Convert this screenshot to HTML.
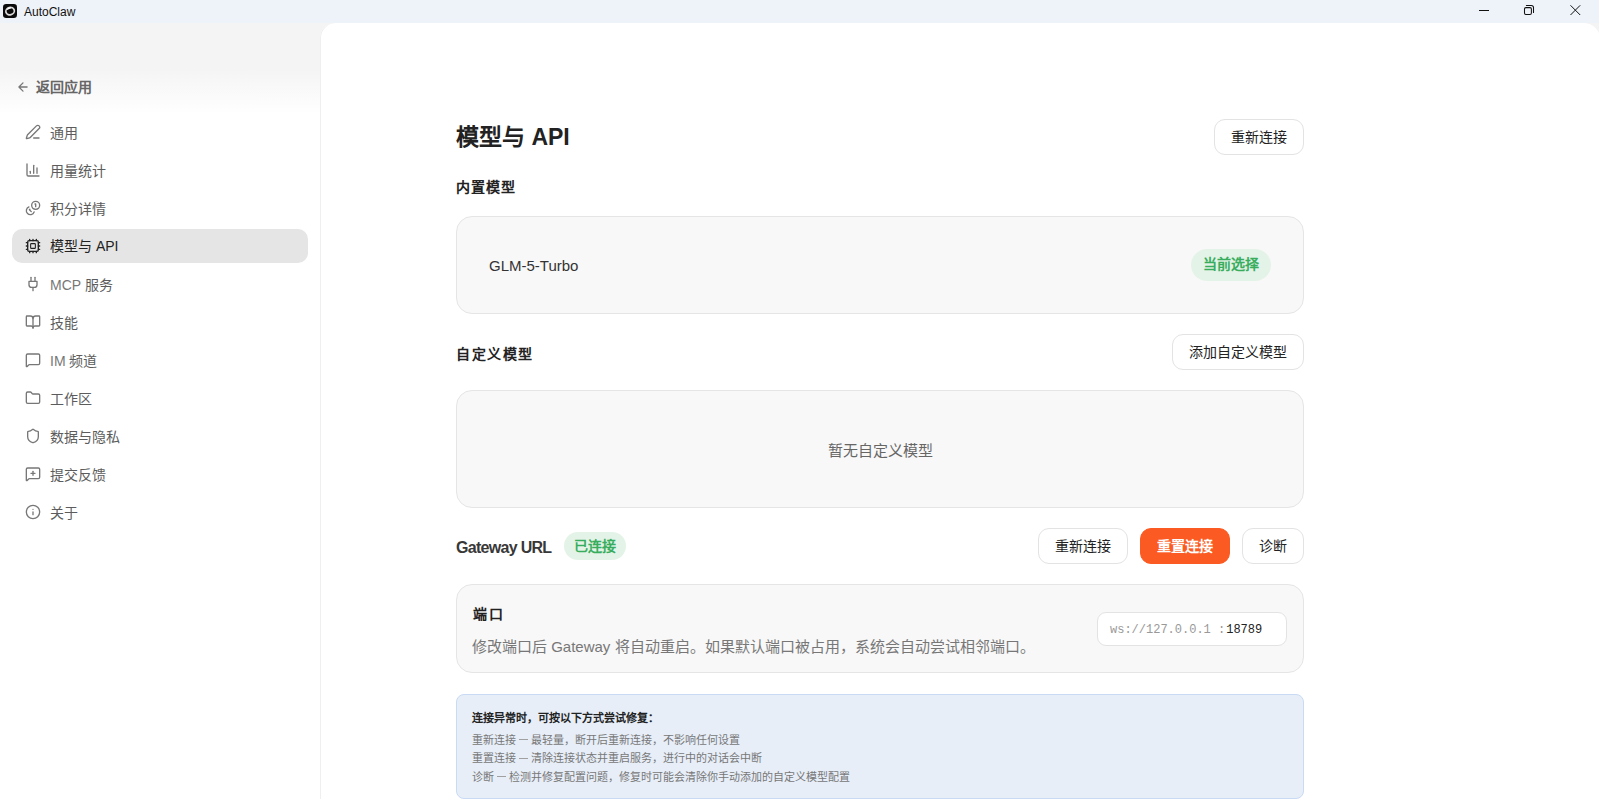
<!DOCTYPE html>
<html lang="zh-CN">
<head>
<meta charset="utf-8">
<style>
*{box-sizing:border-box;margin:0;padding:0}
html,body{width:1599px;height:799px;overflow:hidden;background:#f4f4f4;font-family:"Liberation Sans",sans-serif;color:#222}
.abs{position:absolute;white-space:nowrap}
#titlebar{position:absolute;left:0;top:0;width:1599px;height:23px;background:#eef3fa}
#sidebar{position:absolute;left:0;top:23px;width:320px;height:776px;background:linear-gradient(#f4f4f4 0px,#f4f4f4 45px,#ffffff 92px,#ffffff)}
#main{position:absolute;left:320px;top:23px;width:1280px;height:776px;background:#fff;border-top-left-radius:15px;border-top-right-radius:16px;box-shadow:inset 1px 0 0 #efefef}
.nav{position:absolute;left:12px;width:296px;height:34px;border-radius:10px;font-size:14px;color:#5c5c5c;font-weight:500}
.nav.active{background:#e5e5e5;color:#222}
.ico{position:absolute;left:25px;width:16px;height:16px;fill:none;stroke:#777;stroke-width:2;stroke-linecap:round;stroke-linejoin:round}
.nav span{position:absolute;left:38px;top:8px;line-height:18px;white-space:nowrap}
.btn{position:absolute;height:36px;border:1px solid #e3e3e3;border-radius:11px;background:#fff;font-size:14px;font-weight:500;color:#222;text-align:center;line-height:34px}
.card{position:absolute;left:136px;width:848px;background:#f8f8f8;border:1px solid #e5e5e5;border-radius:16px}
.dash{display:inline-block;width:9px;height:1px;background:#a0a0a0;vertical-align:middle;position:relative;top:-1px}
.badge{position:absolute;border-radius:16px;background:#e4f3e8;color:#39ad5e;font-size:14px;text-align:center;font-weight:700}
</style>
</head>
<body>
<div id="titlebar">
  <svg class="abs" style="left:3px;top:4px" width="14" height="14" viewBox="0 0 14 14"><rect x="0" y="0" width="14" height="14" rx="3.2" fill="#0b0b0b"/><ellipse cx="7.1" cy="7.1" rx="4.3" ry="3.7" transform="rotate(-15 7.1 7.1)" fill="none" stroke="#dcdcdc" stroke-width="1.7"/><path d="M4.2 5.6q1.5-1.8 3.6-1.6" stroke="#fff" stroke-width="1.3" fill="none"/></svg>
  <div class="abs" style="left:24px;top:5px;font-size:12px;line-height:15px;color:#111">AutoClaw</div>
  <svg class="abs" style="left:1474px;top:0" width="20" height="22" viewBox="0 0 20 22"><path d="M5 10.5h10" stroke="#111" stroke-width="1"/></svg>
  <svg class="abs" style="left:1518px;top:0" width="20" height="22" viewBox="0 0 20 22"><rect x="6.5" y="7.6" width="6.9" height="6.8" rx="1.4" stroke="#111" stroke-width="1.05" fill="none"/><path d="M8.4 5.4h4.9a2.2 2.2 0 0 1 2.2 2.2v4.9" stroke="#111" stroke-width="1.05" fill="none" stroke-linecap="round"/></svg>
  <svg class="abs" style="left:1565px;top:0" width="22" height="22" viewBox="0 0 22 22"><path d="M5.5 5.3l9.7 9.7M15.2 5.3l-9.7 9.7" stroke="#111" stroke-width="1"/></svg>
</div>
<div id="sidebar">
  <svg class="ico" style="left:15.7px;top:56.5px;width:14px;height:14px;stroke-width:2.2" viewBox="0 0 24 24"><path d="m12 19-7-7 7-7M19 12H5"/></svg>
  <div class="abs" style="left:36px;top:55px;font-size:14px;line-height:18px;color:#666;font-weight:bold">返回应用</div>
  <div class="nav" style="top:93px"><span>通用</span></div>
  <div class="nav" style="top:131px"><span>用量统计</span></div>
  <div class="nav" style="top:169px"><span>积分详情</span></div>
  <div class="nav active" style="top:206px"><span>模型与 API</span></div>
  <div class="nav" style="top:245px"><span><b style="font-weight:400;color:#777">MCP</b> 服务</span></div>
  <div class="nav" style="top:283px"><span>技能</span></div>
  <div class="nav" style="top:321px"><span><b style="font-weight:400;color:#777">IM</b> 频道</span></div>
  <div class="nav" style="top:359px"><span>工作区</span></div>
  <div class="nav" style="top:397px"><span>数据与隐私</span></div>
  <div class="nav" style="top:435px"><span>提交反馈</span></div>
  <div class="nav" style="top:473px"><span>关于</span></div>
  <!-- icons (sidebar top = 23) -->
  <svg class="ico" style="top:100.6px" viewBox="0 0 24 24"><path d="M13 21h8"/><path d="M21.174 6.812a1 1 0 0 0-3.986-3.987L3.842 16.174a2 2 0 0 0-.5.83l-1.321 4.352a.5.5 0 0 0 .623.622l4.353-1.32a2 2 0 0 0 .83-.497z"/></svg>
  <svg class="ico" style="top:138.6px" viewBox="0 0 24 24"><path d="M3 3v16a2 2 0 0 0 2 2h16"/><path d="M18 17V9"/><path d="M13 17V5"/><path d="M8 17v-3"/></svg>
  <svg class="ico" style="top:176.6px" viewBox="0 0 24 24"><circle cx="16" cy="8" r="6"/><path d="M5.91 10.37A6 6 0 1 0 13.66 18"/><path d="M15 6h1v4"/><path d="M7.29 13.88l-.7.71 2.82 2.82"/></svg>
  <svg class="ico" style="top:214.6px;stroke:#222" viewBox="0 0 24 24"><rect width="16" height="16" x="4" y="4" rx="2"/><rect width="7.1" height="7.1" x="8.45" y="8.45" rx="1" stroke-width="1.6"/><path d="M12 2v2M7 2v2M17 2v2M12 20v2M7 20v2M17 20v2M2 12h2M2 7h2M2 17h2M20 12h2M20 7h2M20 17h2"/></svg>
  <svg class="ico" style="top:252.6px" viewBox="0 0 24 24"><path d="M12 22v-5"/><path d="M9 8V2"/><path d="M15 8V2"/><path d="M18 8v5a4 4 0 0 1-4 4h-4a4 4 0 0 1-4-4V8Z"/></svg>
  <svg class="ico" style="top:290.6px" viewBox="0 0 24 24"><path d="M12 7v14"/><path d="M3 18a1 1 0 0 1-1-1V4a1 1 0 0 1 1-1h5a4 4 0 0 1 4 4 4 4 0 0 1 4-4h5a1 1 0 0 1 1 1v13a1 1 0 0 1-1 1h-6a3 3 0 0 0-3 3 3 3 0 0 0-3-3z"/></svg>
  <svg class="ico" style="top:328.6px" viewBox="0 0 24 24"><path d="M22 17a2 2 0 0 1-2 2H6.828a2 2 0 0 0-1.414.586l-2.202 2.202A.71.71 0 0 1 2 21.286V5a2 2 0 0 1 2-2h16a2 2 0 0 1 2 2z"/></svg>
  <svg class="ico" style="top:366.6px" viewBox="0 0 24 24"><path d="M20 20a2 2 0 0 0 2-2V8a2 2 0 0 0-2-2h-7.9a2 2 0 0 1-1.69-.9L9.6 3.9A2 2 0 0 0 7.93 3H4a2 2 0 0 0-2 2v13a2 2 0 0 0 2 2Z"/></svg>
  <svg class="ico" style="top:404.6px" viewBox="0 0 24 24"><path d="M20 13c0 5-3.5 7.5-7.66 8.95a1 1 0 0 1-.67-.01C7.5 20.5 4 18 4 13V6a1 1 0 0 1 1-1c2 0 4.5-1.2 6.24-2.72a1.17 1.17 0 0 1 1.520 0C14.51 3.81 17 5 19 5a1 1 0 0 1 1 1z"/></svg>
  <svg class="ico" style="top:442.6px" viewBox="0 0 24 24"><path d="M22 17a2 2 0 0 1-2 2H6.828a2 2 0 0 0-1.414.586l-2.202 2.202A.71.71 0 0 1 2 21.286V5a2 2 0 0 1 2-2h16a2 2 0 0 1 2 2z"/><path d="M12 8v6"/><path d="M9 11h6"/></svg>
  <svg class="ico" style="top:480.6px" viewBox="0 0 24 24"><circle cx="12" cy="12" r="10"/><path d="M12 16v-4"/><path d="M12 8h.01"/></svg>
</div>
<div id="main">
  <div class="abs" style="left:136px;top:95px;font-size:23px;font-weight:bold;color:#222">模型与 API</div>
  <div class="btn" style="left:894px;top:96px;width:90px">重新连接</div>
  <div class="abs" style="left:136px;top:153px;font-size:14px;font-weight:700;letter-spacing:1.1px;color:#222">内置模型</div>
  <div class="card" style="top:193px;height:98px">
    <div class="abs" style="left:32px;top:40px;font-size:15px;color:#333">GLM-5-Turbo</div>
    <div class="badge" style="left:734px;top:32px;width:80px;height:32px;line-height:30px">当前选择</div>
  </div>
  <div class="abs" style="left:136px;top:320px;font-size:14px;font-weight:700;letter-spacing:1.5px;color:#222">自定义模型</div>
  <div class="btn" style="left:852px;top:311px;width:132px">添加自定义模型</div>
  <div class="card" style="top:367px;height:118px">
    <div class="abs" style="left:0;width:846px;top:47.5px;text-align:center;font-size:15px;color:#666">暂无自定义模型</div>
  </div>
  <div class="abs" style="left:136px;top:516px;font-size:16px;font-weight:bold;letter-spacing:-0.7px;color:#383838">Gateway URL</div>
  <div class="badge" style="left:244px;top:509px;width:62px;height:28px;line-height:28px;border-radius:14px">已连接</div>
  <div class="btn" style="left:718px;top:505px;width:90px">重新连接</div>
  <div class="btn" style="left:820px;top:505px;width:90px;background:#fb5a22;border-color:#fb5a22;color:#fff;font-weight:700">重置连接</div>
  <div class="btn" style="left:922px;top:505px;width:62px">诊断</div>
  <div class="card" style="top:561px;height:89px">
    <div class="abs" style="left:16px;top:18px;font-size:14px;font-weight:700;letter-spacing:2px;color:#222">端口</div>
    <div class="abs" style="left:15px;top:50px;font-size:15px;color:#777">修改端口后 Gateway 将自动重启。如果默认端口被占用，系统会自动尝试相邻端口。</div>
    <div class="abs" style="left:640px;top:27px;width:190px;height:34px;background:#fff;border:1px solid #e3e3e3;border-radius:9px;font-family:'Liberation Mono',monospace;font-size:12px;line-height:33px;padding-left:12px;padding-top:1px"><span style="color:#999">ws://127.0.0.1 :</span><span style="color:#222;margin-left:1px">18789</span></div>
  </div>
  <div class="abs" style="left:136px;top:671px;width:848px;height:105px;background:#e7eef8;border:1px solid #c8daf4;border-radius:8px">
    <div class="abs" style="left:14.5px;top:13.5px;font-size:11px;font-weight:bold;color:#222">连接异常时，可按以下方式尝试修复：</div>
    <div class="abs" style="left:14.5px;top:35.75px;font-size:11px;line-height:18.5px;color:#777">重新连接 <i class="dash"></i> 最轻量，断开后重新连接，不影响任何设置<br>重置连接 <i class="dash"></i> 清除连接状态并重启服务，进行中的对话会中断<br>诊断 <i class="dash"></i> 检测并修复配置问题，修复时可能会清除你手动添加的自定义模型配置</div>
  </div>
</div>
</body>
</html>
